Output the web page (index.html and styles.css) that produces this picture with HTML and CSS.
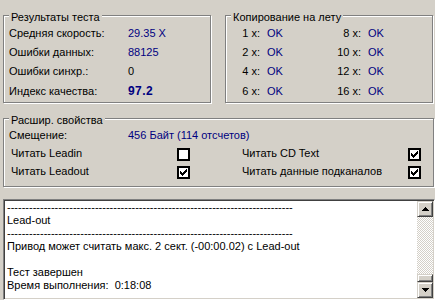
FILE: index.html
```html
<!DOCTYPE html>
<html lang="ru">
<head>
<meta charset="UTF-8">
<title>Результаты теста</title>
<link rel="stylesheet" href="styles.css">
</head>
<body>
<div class="top">
  <div class="group">
    <div class="group-title">Результаты теста</div>
    <div class="stats">
      <span>Средняя скорость:</span><span class="val">29.35 X</span>
      <span>Ошибки данных:</span><span class="val">88125</span>
      <span>Ошибки синхр.:</span><span>0</span>
      <span>Индекс качества:</span><span class="val big">97.2</span>
    </div>
  </div>
  <div class="group">
    <div class="group-title">Копирование на лету</div>
    <div class="speeds">
      <span class="sp">1 x:</span><span class="val ok">OK</span><span class="sp">8 x:</span><span class="val ok">OK</span>
      <span class="sp">2 x:</span><span class="val ok">OK</span><span class="sp">10 x:</span><span class="val ok">OK</span>
      <span class="sp">4 x:</span><span class="val ok">OK</span><span class="sp">12 x:</span><span class="val ok">OK</span>
      <span class="sp">6 x:</span><span class="val ok">OK</span><span class="sp">16 x:</span><span class="val ok">OK</span>
    </div>
  </div>
</div>

<div class="group ext">
  <div class="group-title">Расшир. свойства</div>
  <div class="offset">
    <span>Смещение:</span><span class="val">456 Байт (114 отсчетов)</span>
  </div>
  <div class="opts">
    <span>Читать Leadin</span><span class="check"></span><span></span>
    <span>Читать CD Text</span><span class="check on"><svg width="7" height="7"><rect x="0" y="2" width="1" height="3"/><rect x="1" y="3" width="1" height="3"/><rect x="2" y="4" width="1" height="3"/><rect x="3" y="3" width="1" height="3"/><rect x="4" y="2" width="1" height="3"/><rect x="5" y="1" width="1" height="3"/><rect x="6" y="0" width="1" height="3"/></svg></span>
    <span>Читать Leadout</span><span class="check on"><svg width="7" height="7"><rect x="0" y="2" width="1" height="3"/><rect x="1" y="3" width="1" height="3"/><rect x="2" y="4" width="1" height="3"/><rect x="3" y="3" width="1" height="3"/><rect x="4" y="2" width="1" height="3"/><rect x="5" y="1" width="1" height="3"/><rect x="6" y="0" width="1" height="3"/></svg></span><span></span>
    <span>Читать данные подканалов</span><span class="check on"><svg width="7" height="7"><rect x="0" y="2" width="1" height="3"/><rect x="1" y="3" width="1" height="3"/><rect x="2" y="4" width="1" height="3"/><rect x="3" y="3" width="1" height="3"/><rect x="4" y="2" width="1" height="3"/><rect x="5" y="1" width="1" height="3"/><rect x="6" y="0" width="1" height="3"/></svg></span>
  </div>
</div>

<div class="log">
<div class="log-text">------------------------------------------------------------------------------
Lead-out
------------------------------------------------------------------------------
Привод может считать макс. 2 сект. (-00:00.02) с Lead-out

Тест завершен
Время выполнения:  0:18:08</div>
  <div class="scrollbar">
    <div class="sb-btn"><svg width="7" height="4"><rect x="3" y="0" width="1" height="1"/><rect x="2" y="1" width="3" height="1"/><rect x="1" y="2" width="5" height="1"/><rect x="0" y="3" width="7" height="1"/></svg></div>
    <div class="track"></div>
    <div class="sb-btn thumb"></div>
    <div class="sb-btn"><svg width="7" height="4"><rect x="0" y="0" width="7" height="1"/><rect x="1" y="1" width="5" height="1"/><rect x="2" y="2" width="3" height="1"/><rect x="3" y="3" width="1" height="1"/></svg></div>
  </div>
</div>
</body>
</html>
```

FILE: styles.css
```css
body {
    margin: 0;
    overflow: hidden;
    background-color: #d4d0c8;
    font-family: "Liberation Sans", Arial, sans-serif;
    font-size: 11px;
    color: #000;
}

.top {
    display: flex;
    gap: 14px;
    padding: 15px 0 0 3px;
}

.group {
    box-sizing: border-box;
    width: 208px;
    height: 88px;
    border: 1px solid #808080;
    box-shadow: inset 1px 1px #fff, 1px 1px #fff;
}

.group-title {
    width: fit-content;
    margin: -5px 0 0 5px;
    padding: 0 2px;
    line-height: 12px;
    background-color: #d4d0c8;
}

.val {
    color: #000080;
}

.big {
    font-weight: bold;
    font-size: 12px;
    line-height: 18.5px;
    letter-spacing: 0.4px;
}

.stats {
    display: grid;
    grid-template-columns: 119px auto;
    padding: 1px 0 0 5px;
    line-height: 19.2px;
}

.speeds {
    display: grid;
    grid-template-columns: 34px 67px 34px auto;
    padding-top: 1px;
    line-height: 19.2px;
}

.sp {
    text-align: right;
}

.ok {
    padding-left: 7px;
}

.ext {
    width: 431px;
    height: 69px;
    margin: 15px 0 0 3px;
}

.offset {
    display: grid;
    grid-template-columns: 119px auto;
    padding-left: 5px;
    line-height: 18px;
}

.opts {
    display: grid;
    grid-template-columns: 166px 13px 52px 166px 13px;
    padding-left: 7px;
    line-height: 18px;
}

.check {
    box-sizing: border-box;
    width: 13px;
    height: 13px;
    margin-top: 4px;
    border: 2px solid #000;
    background-color: #fff;
}

.check svg {
    display: block;
    margin: 1px;
}

.log {
    box-sizing: border-box;
    display: flex;
    width: 432px;
    height: 101px;
    margin: 12px 0 0 3px;
    border: 1px solid;
    border-color: #808080 #fff #fff #808080;
    box-shadow: inset 1px 1px #404040, inset -1px -1px #d4d0c8;
    padding: 1px;
    background-color: #fff;
}

.log-text {
    flex: 1;
    padding: 0 2px;
    white-space: pre;
    line-height: 13px;
    overflow: hidden;
}

.scrollbar {
    width: 16px;
    display: flex;
    flex-direction: column;
    background-image: conic-gradient(#fff 25%, #d4d0c8 0 50%, #fff 0 75%, #d4d0c8 0);
    background-size: 2px 2px;
}

.sb-btn {
    box-sizing: border-box;
    height: 16px;
    display: flex;
    align-items: center;
    justify-content: center;
    background-color: #d4d0c8;
    border: 1px solid;
    border-color: #d4d0c8 #404040 #404040 #d4d0c8;
    box-shadow: inset 1px 1px #fff, inset -1px -1px #808080;
}

.track {
    flex: 1;
}

.thumb {
    height: 8px;
}
```
